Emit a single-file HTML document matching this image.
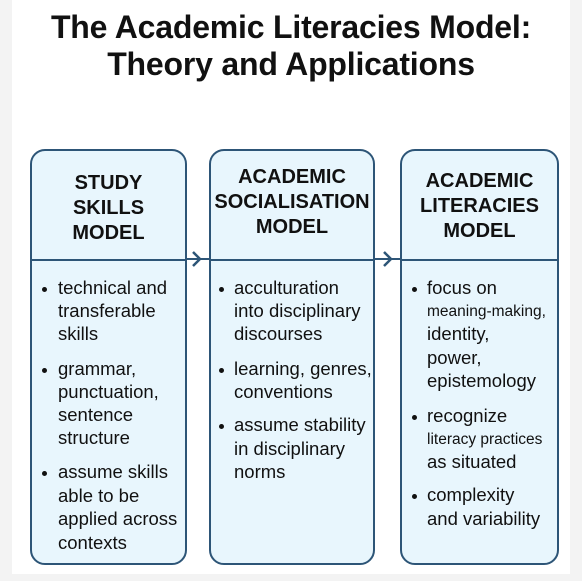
<!DOCTYPE html>
<html><head><meta charset="utf-8"><style>
html,body{margin:0;padding:0;}
body{width:582px;height:581px;background:#f3f3f3;position:relative;overflow:hidden;font-family:"Liberation Sans",sans-serif;color:#111;}
.bg{position:absolute;left:12px;top:0;width:558px;height:574px;background:#fff;}
.t{position:absolute;left:0;width:582px;text-align:center;font-weight:bold;font-size:32px;letter-spacing:-0.2px;}
.box{position:absolute;top:149px;height:416px;background:#e8f6fd;border:2px solid #2d5577;border-radius:15px;box-sizing:border-box;}
.hl{position:absolute;left:0;right:0;top:108px;border-top:2px solid #2d5577;}
.h{position:absolute;text-align:center;font-weight:bold;font-size:20px;line-height:25px;left:-4px;right:-4px;}
.l{position:absolute;font-size:18.5px;white-space:nowrap;line-height:20px;}
.s{font-size:15.5px;}
.b{position:absolute;width:5px;height:5px;border-radius:50%;background:#111;}
</style></head><body>
<div class="bg"></div>
<div class="t" style="top:9px">The Academic Literacies Model:</div>
<div class="t" style="top:46px">Theory and Applications</div>

<div class="box" style="left:30px;width:157px"><div class="hl"></div>
<div class="h" style="top:20px">STUDY<br>SKILLS<br>MODEL</div></div>
<div class="box" style="left:209px;width:166px"><div class="hl"></div>
<div class="h" style="top:14px">ACADEMIC<br>SOCIALISATION<br>MODEL</div></div>
<div class="box" style="left:400px;width:159px"><div class="hl"></div>
<div class="h" style="top:18px">ACADEMIC<br>LITERACIES<br>MODEL</div></div>

<svg style="position:absolute;left:0;top:0" width="582" height="581">
<path d="M193 252 L200 259 L193 266 M384 252 L391 259 L384 266" fill="none" stroke="#2d5577" stroke-width="2.5"/>
<line x1="186" y1="259" x2="209" y2="259" stroke="#2d5577" stroke-width="2"/>
<line x1="375" y1="259" x2="400" y2="259" stroke="#2d5577" stroke-width="2"/>
</svg>

<div class="b" style="left:42px;top:287px"></div>
<div class="l" style="left:58px;top:278px">technical and</div>
<div class="l" style="left:58px;top:301px">transferable</div>
<div class="l" style="left:58px;top:324px">skills</div>
<div class="b" style="left:42px;top:368px"></div>
<div class="l" style="left:58px;top:359px">grammar,</div>
<div class="l" style="left:58px;top:382px">punctuation,</div>
<div class="l" style="left:58px;top:405px">sentence</div>
<div class="l" style="left:58px;top:428px">structure</div>
<div class="b" style="left:42px;top:471px"></div>
<div class="l" style="left:58px;top:462px">assume skills</div>
<div class="l" style="left:58px;top:486px">able to be</div>
<div class="l" style="left:58px;top:509px">applied across</div>
<div class="l" style="left:58px;top:533px">contexts</div>

<div class="b" style="left:219px;top:287px"></div>
<div class="l" style="left:234px;top:278px">acculturation</div>
<div class="l" style="left:234px;top:301px">into disciplinary</div>
<div class="l" style="left:234px;top:324px">discourses</div>
<div class="b" style="left:219px;top:368px"></div>
<div class="l" style="left:234px;top:359px">learning, genres,</div>
<div class="l" style="left:234px;top:382px">conventions</div>
<div class="b" style="left:219px;top:424px"></div>
<div class="l" style="left:234px;top:415px">assume stability</div>
<div class="l" style="left:234px;top:439px">in disciplinary</div>
<div class="l" style="left:234px;top:462px">norms</div>

<div class="b" style="left:412px;top:287px"></div>
<div class="l" style="left:427px;top:278px">focus on</div>
<div class="l s" style="left:427px;top:302px">meaning-making,</div>
<div class="l" style="left:427px;top:324px">identity,</div>
<div class="l" style="left:427px;top:348px">power,</div>
<div class="l" style="left:427px;top:371px">epistemology</div>
<div class="b" style="left:412px;top:415px"></div>
<div class="l" style="left:427px;top:406px">recognize</div>
<div class="l s" style="left:427px;top:430px">literacy practices</div>
<div class="l" style="left:427px;top:452px">as situated</div>
<div class="b" style="left:412px;top:494px"></div>
<div class="l" style="left:427px;top:485px">complexity</div>
<div class="l" style="left:427px;top:509px">and variability</div>
</body></html>
